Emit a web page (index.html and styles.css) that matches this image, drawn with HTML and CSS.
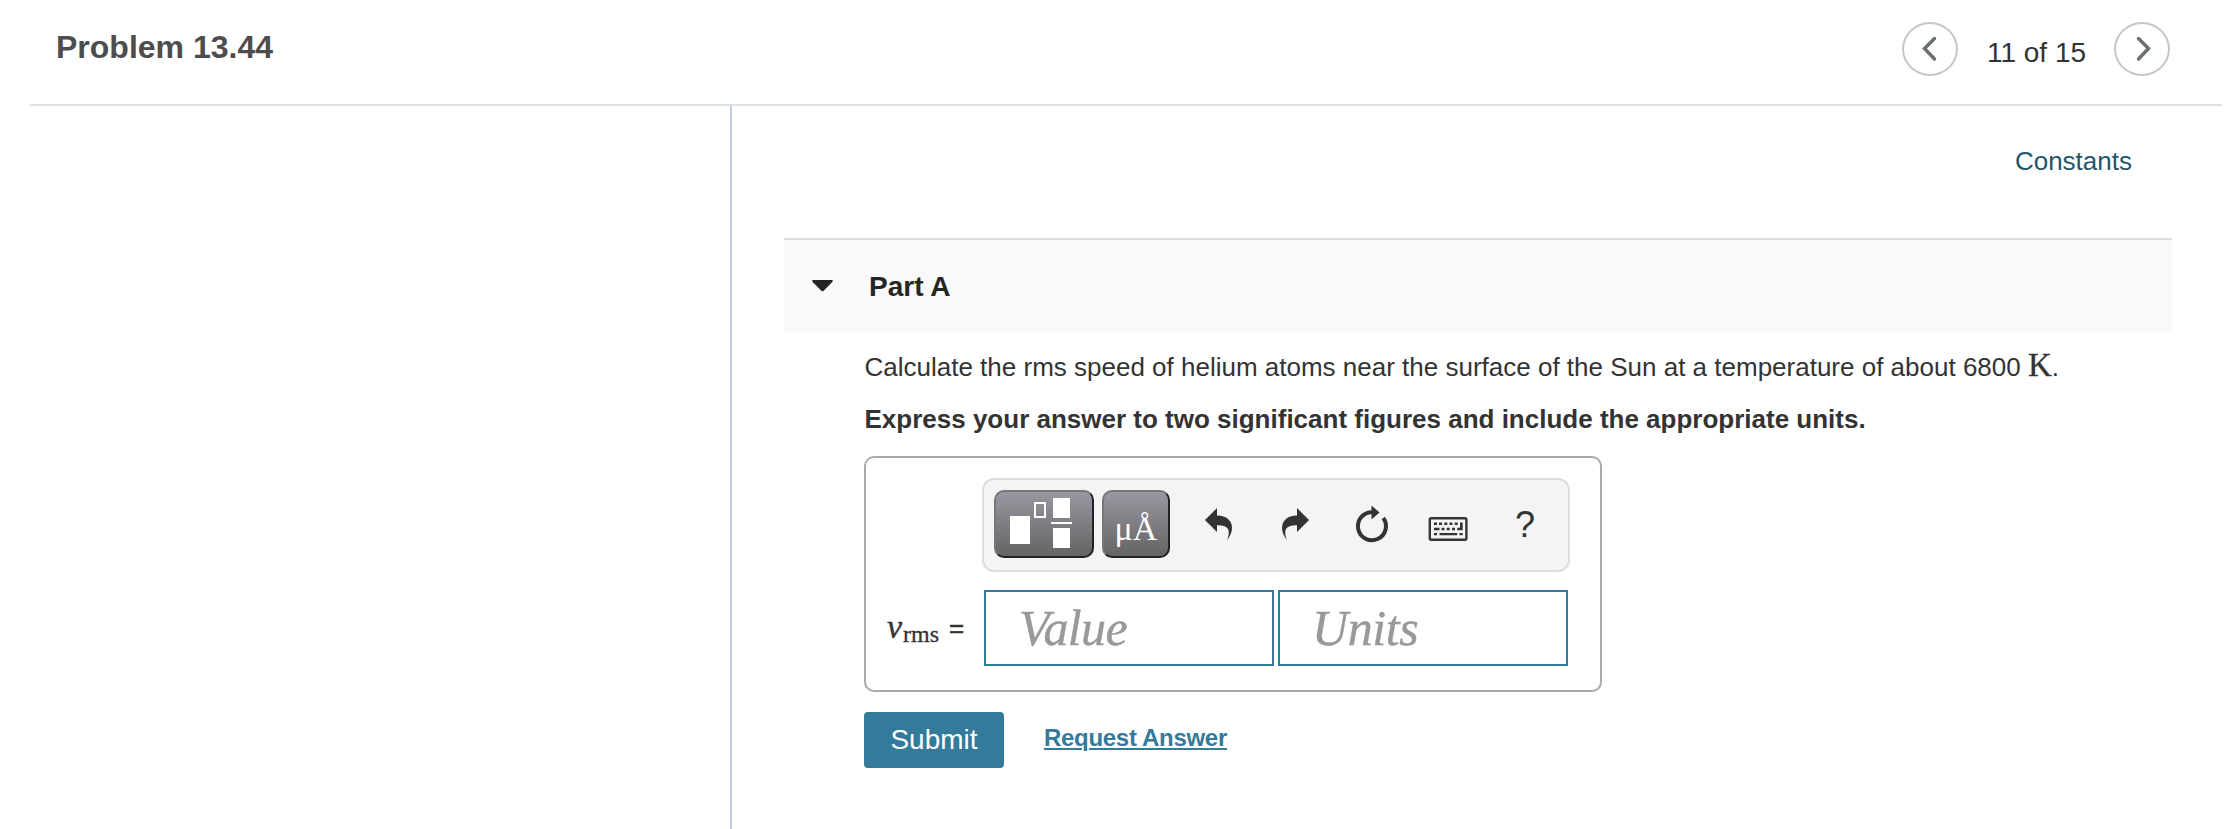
FILE: index.html
```html
<!DOCTYPE html>
<html lang="en">
<head>
<meta charset="utf-8">
<title>Problem 13.44</title>
<link rel="stylesheet" href="styles.css">
</head>
<body>
<header class="header">
  <h1 class="title">Problem 13.44</h1>
  <nav class="pager">
    <button class="round" aria-label="Previous"><svg width="52" height="50" viewBox="0 0 52 50"><path d="M30.500 14.500 20.500 24.500 30.500 35" /></svg></button>
    <span class="count">11 of 15</span>
    <button class="round" aria-label="Next"><svg width="52" height="50" viewBox="0 0 52 50"><path d="M22.500 14.500 32.500 24.500 22.500 35" /></svg></button>
  </nav>
</header>
<div class="columns">
  <aside class="side"></aside>
  <main class="main">
    <a class="constants">Constants</a>
    <section class="part-head">
      <svg class="caret" width="22" height="12" viewBox="0 0 22 12"><path d="M1.500 0h18q2 .2 1 1.700L11.700 10.800q-1.200 1-2.400 0L.4 1.700Q-.5 .2 1.500 0z"/></svg>
      <h2 class="part-title">Part A</h2>
    </section>
    <section class="body">
      <p class="question">Calculate the rms speed of helium atoms near the surface of the Sun at a temperature of about 6800 <span class="unit">K</span>.</p>
      <p class="hint">Express your answer to two significant figures and include the appropriate units.</p>
      <div class="answer">
        <div class="toolbar">
          <button class="tool tool-wide" aria-label="Templates"><svg width="96" height="64" viewBox="0 0 96 64"><path fill="#fff" d="M14 24h20v28H14zM57 6h17v20H57zM57 36h17v20H57zM55 30h21v2H55z"/><path fill="none" stroke="#fff" stroke-width="2" d="M39 11h10v14H39z"/></svg></button>
          <button class="tool">μÅ</button>
          <div class="icons">
            <svg class="icon" viewBox="0 0 77 68"><path d="M25 30 37 18v7.500C47 25.500 52 31 52 38q0 6-5 12 3-7 1-11-2-4-11-3.800V42z"/></svg>
            <svg class="icon" viewBox="0 0 77 68"><path d="M52 30 40 18v7.500C30 25.500 25 31 25 38q0 6 5 12-3-7-1-11 2-4 11-3.800V42z"/></svg>
            <svg class="icon" viewBox="0 0 77 68"><path fill="none" stroke="#333" stroke-width="4" d="M38 22.200a14 14 0 1 0 11.300 5.800"/><path d="m37.500 15.500 8 7-8 7z"/></svg>
            <svg class="icon" viewBox="0 0 77 68"><rect x="18.800" y="28.200" width="36.600" height="21.600" rx="1.500" fill="none" stroke="#333" stroke-width="2.400"/><path d="M23 32.500h3v2.500h-3zm5 0h3v2.500h-3zm5.300 0h3v2.500h-3zm5.200 0h3v2.500h-3zm5.200 0h3v2.500h-3zM23 37.800h5.500v2.500H23zm7.500 0h3v2.500h-3zm5.200 0h3v2.500h-3zm5.300 0h3v2.500h-3zM49 32.500h2.700v7.800h-5.500v-2.500H49zM23 43h3v2.300h-3zm5.500 0h17.700v2.300H28.500zm20 0h3.200v2.300h-3.200z"/></svg>
            <span class="help">?</span>
          </div>
        </div>
        <div class="entry">
          <div class="label"><span class="var">v</span><span class="sub">rms</span><span class="eq">=</span></div>
          <div class="field value">Value</div>
          <div class="field units">Units</div>
        </div>
      </div>
      <div class="actions">
        <button class="submit">Submit</button>
        <a class="request">Request Answer</a>
      </div>
    </section>
  </main>
</div>
</body>
</html>
```

FILE: styles.css
```css
* { box-sizing: border-box; }
body {
  margin: 0;
  height: 829px;
  overflow: hidden;
  background: #fff;
  color: #333;
  font: 26px/30px "Liberation Sans", Arial, sans-serif;
  display: flex;
  flex-direction: column;
}
h1, h2, p { margin: 0; }
button { font: inherit; padding: 0; margin: 0; }

.header {
  height: 106px;
  margin: 0 15px 0 30px;
  padding: 22px 52px 0 26px;
  border-bottom: 2px solid #e0e0e0;
  display: flex;
  justify-content: space-between;
  align-items: flex-start;
}
.title { font-size: 32px; line-height: 36px; padding-top: 7px; color: #4d4d4d; }
.pager { display: flex; }
.round {
  width: 56px;
  height: 54px;
  border: 2px solid #c6c6c6;
  border-radius: 50%;
  background: #fff;
}
.round svg { display: block; fill: none; stroke: #6a7070; stroke-width: 3.4; stroke-linecap: round; }
.count { width: 156px; padding: 15px 0 0 1px; font-size: 28px; line-height: 32px; text-align: center; }

.columns { flex: 1; display: flex; }
.side { width: 732px; border-right: 2px solid #bfccdd; }
.main { flex: 1; padding: 40px 65px 0 52px; display: flex; flex-direction: column; }
.constants { align-self: flex-end; margin-right: 40px; color: #1f566b; }

.part-head {
  height: 94px;
  margin-top: 62px;
  padding-left: 28px;
  border-top: 2px solid #ddd;
  background: #f9f9f9;
  display: flex;
  align-items: center;
}
.caret { fill: #252525; }
.part-title { margin-left: 35px; padding-top: 1px; font-size: 28px; line-height: 32px; color: #252525; }

.body { padding: 20px 0 0 80px; }
.question { height: 30px; padding-left: 0.5px; white-space: nowrap; }
.unit { font: 33px/20px "Liberation Serif", serif; -webkit-text-stroke: 0.3px #333; }
.hint { margin-top: 22px; padding-left: 0.5px; font-weight: bold; white-space: nowrap; }

.answer {
  width: 738px;
  height: 236px;
  margin-top: 22px;
  padding: 20px 30px 0 20px;
  border: 2px solid #aaa;
  border-radius: 10px;
}
.toolbar {
  width: 588px;
  height: 94px;
  margin-left: 96px;
  padding: 10px;
  border: 2px solid #ddd;
  border-radius: 12px;
  background: #f4f4f4;
  display: flex;
}
.tool {
  flex: none;
  width: 68px;
  height: 68px;
  margin-right: 8px;
  border: 2px solid;
  border-color: #777 #222 #222 #777;
  border-radius: 10px;
  background: linear-gradient(#9997a1, #646464);
  color: #fff;
  font: 34px/60px "Liberation Serif", serif;
  padding-top: 7px;
}
.tool-wide { width: 100px; padding: 0; }
.tool svg { display: block; }
.icons { display: flex; flex: none; margin-left: 2px; }
.icon { width: 77px; height: 68px; fill: #333; }
.help { width: 74px; font-size: 36px; line-height: 69px; text-align: center; }

.entry { display: flex; margin-top: 18px; height: 76px; }
.label { flex: none; width: 98px; padding: 27px 0 0 1px; display: flex; align-items: baseline; line-height: 20px; }
.var { font: italic 34px/20px "Liberation Serif", serif; -webkit-text-stroke: 0.4px #333; }
.sub { margin-left: 1px; font: 24px/20px "Liberation Serif", serif; position: relative; top: 4px; -webkit-text-stroke: 0.3px #333; }
.eq { margin-left: 10px; position: relative; top: -1px; -webkit-text-stroke: 0.5px #333; }
.field {
  width: 290px;
  height: 76px;
  margin-right: 4px;
  padding-left: 32px;
  border: 2px solid #337a9b;
  color: #999;
  font: italic 50px/72px "Liberation Serif", serif;
  -webkit-text-stroke: 0.4px #999;
  flex: none;
}
.value { padding-left: 33px; letter-spacing: -0.6px; }
.units { letter-spacing: -0.4px; }
.actions { display: flex; margin-top: 20px; }
.submit {
  width: 140px;
  height: 56px;
  border: 0;
  border-radius: 4px;
  background: #337a9b;
  color: #fff;
  font-size: 28px;
}
.request {
  margin: 11px 0 0 40px;
  color: #337a9b;
  font-size: 24px;
  letter-spacing: -0.3px;
  font-weight: bold;
  text-decoration: underline;
  text-decoration-thickness: 2px;
  text-underline-offset: 2px;
}
```
